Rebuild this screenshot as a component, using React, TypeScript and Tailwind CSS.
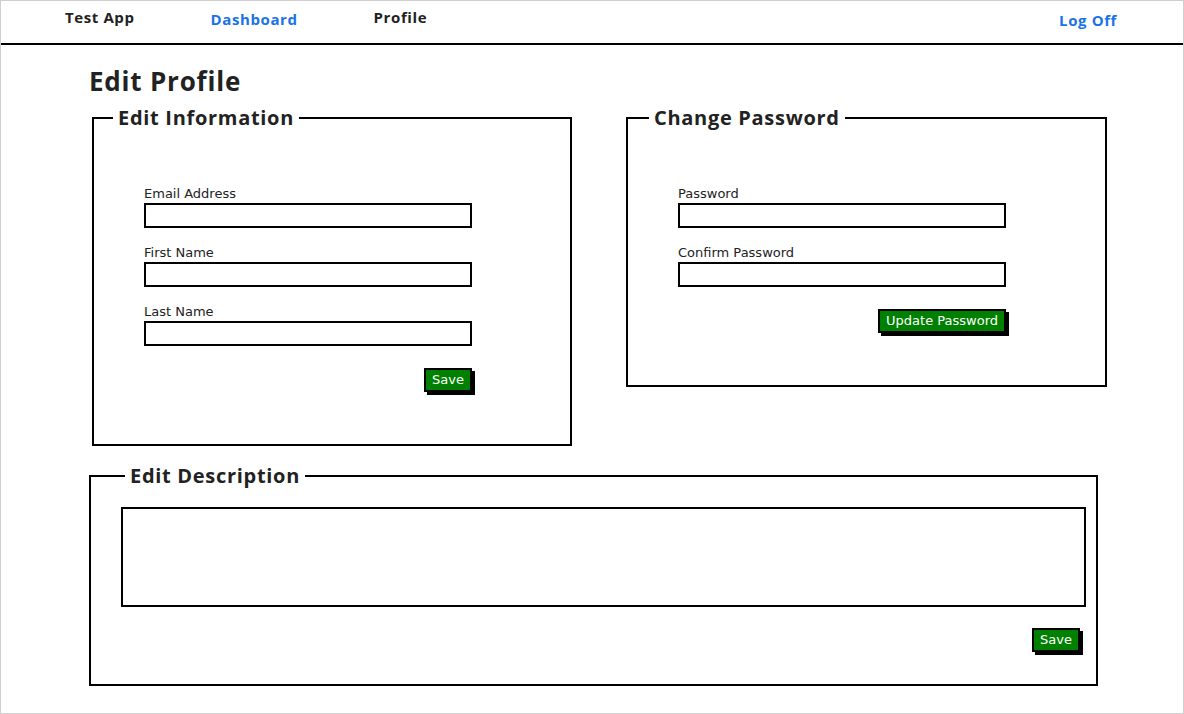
import React from "react";

const heading = { fontFamily: '"Open Sans", "Noto Sans", sans-serif' };
const body = { fontFamily: '"DejaVu Sans", Verdana, sans-serif' };

const Field = ({ label, type = "text" }: { label: string; type?: string }) => (
  <div className="flex flex-col">
    <label className="text-[13px] leading-4 text-[#222]" style={body}>
      {label}
    </label>
    <input
      type={type}
      className="mt-px h-[25px] w-[328px] border-2 border-black bg-white outline-none"
    />
  </div>
);

const GreenButton = ({ children }: { children: React.ReactNode }) => (
  <button
    className="border-2 border-black bg-[#008000] px-[6px] py-[2px] text-[13px] leading-4 text-white shadow-[3px_3px_0_#000]"
    style={body}
  >
    {children}
  </button>
);

const Legend = ({ children, className }: { children: React.ReactNode; className: string }) => (
  <legend
    className={"px-[5px] text-[20px] font-bold leading-6 tracking-[0.7px] text-[#222] " + className}
    style={heading}
  >
    {children}
  </legend>
);

export default function App() {
  return (
    <div className="h-[714px] w-[1184px] overflow-hidden border border-[#cfcfcf] bg-white">
      <nav
        className="flex h-[44px] items-start border-b-2 border-black text-[15px] font-bold tracking-[0.6px]"
        style={heading}
      >
        <span className="ml-[64px] mt-[5px] text-[#222]">Test App</span>
        <a className="ml-[76px] mt-[7px] text-[#1a73e8]">Dashboard</a>
        <span className="ml-[76px] mt-[5px] text-[#222]">Profile</span>
        <a className="ml-auto mr-[66px] mt-[8px] text-[#1a73e8]">Log Off</a>
      </nav>

      <main className="pl-[88px]">
        <h1
          className="mt-[20px] text-[26px] font-bold leading-8 tracking-[0.8px] text-[#222]"
          style={heading}
        >
          Edit Profile
        </h1>

        <div className="ml-[3px] mt-[9px] flex items-start gap-[54px]">
          <fieldset className="w-[480px] border-2 border-black">
            <Legend className="ml-[19px]">Edit Information</Legend>
            <div className="flex flex-col pb-[52px] pl-[50px] pt-[56px]">
              <div className="flex flex-col gap-[17px]">
                <Field label="Email Address" type="email" />
                <Field label="First Name" />
                <Field label="Last Name" />
              </div>
              <div className="mt-[22px] flex w-[328px] justify-end">
                <GreenButton>Save</GreenButton>
              </div>
            </div>
          </fieldset>

          <fieldset className="w-[481px] border-2 border-black">
            <Legend className="ml-[21px]">Change Password</Legend>
            <div className="flex flex-col pb-[52px] pl-[50px] pt-[56px]">
              <div className="flex flex-col gap-[17px]">
                <Field label="Password" type="password" />
                <Field label="Confirm Password" type="password" />
              </div>
              <div className="mt-[22px] flex w-[328px] justify-end">
                <GreenButton>Update Password</GreenButton>
              </div>
            </div>
          </fieldset>
        </div>

        <fieldset className="mt-[18px] w-[1009px] border-2 border-black">
          <Legend className="ml-[34px]">Edit Description</Legend>
          <div className="flex flex-col pb-[32px] pl-[30px] pt-[19px]">
            <textarea className="block h-[100px] w-[965px] resize-none border-2 border-black outline-none" />
            <div className="mt-[21px] flex w-[965px] justify-end pr-[6px]">
              <GreenButton>Save</GreenButton>
            </div>
          </div>
        </fieldset>
      </main>
    </div>
  );
}
